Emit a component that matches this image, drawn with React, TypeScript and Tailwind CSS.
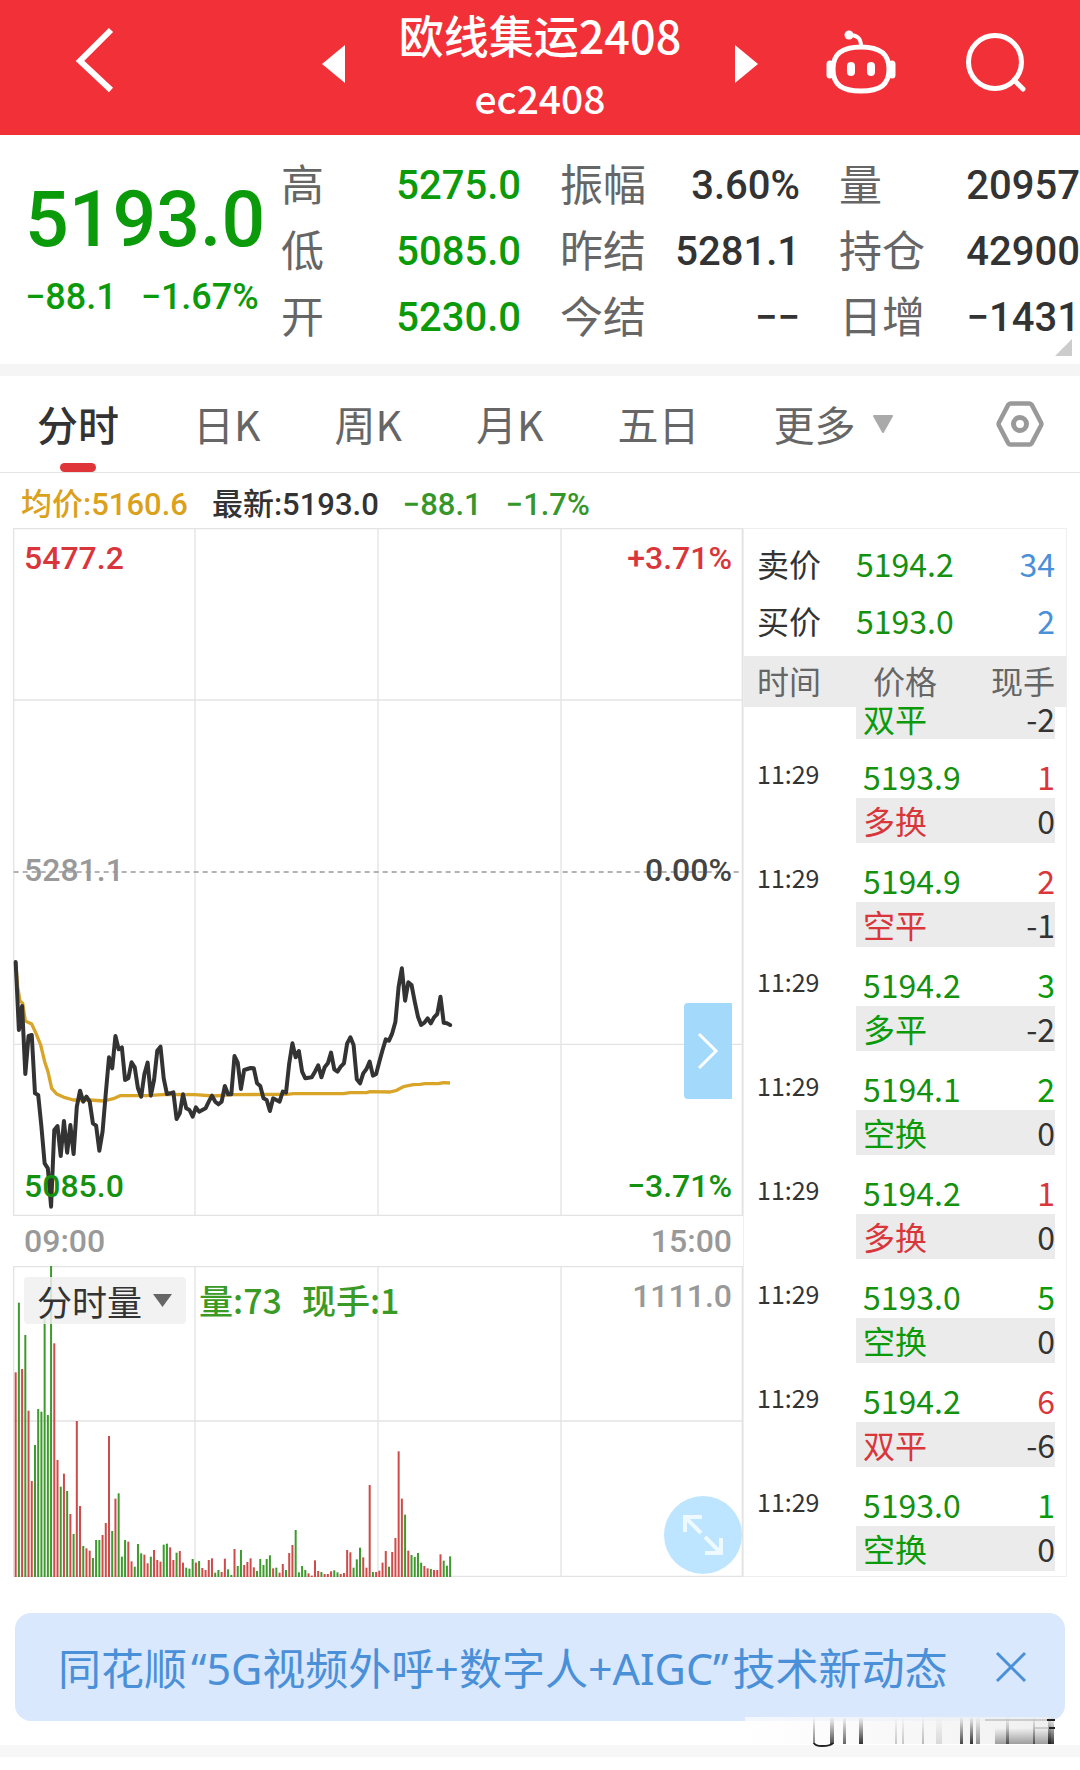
import React from "react";
import clsx from "clsx";

const stats = [
  [
    { label: "高", value: "5275.0", down: true },
    { label: "振幅", value: "3.60%" },
    { label: "量", value: "20957" },
  ],
  [
    { label: "低", value: "5085.0", down: true },
    { label: "昨结", value: "5281.1" },
    { label: "持仓", value: "42900" },
  ],
  [
    { label: "开", value: "5230.0", down: true },
    { label: "今结", value: "−−" },
    { label: "日增", value: "−1431" },
  ],
];

const tabs = ["分时", "日K", "周K", "月K", "五日"];

const quotes = [
  { label: "卖价", price: "5194.2", volume: 34 },
  { label: "买价", price: "5193.0", volume: 2 },
];

const trades = [
  { price: "5193.9", volume: 1, buy: true, type: "多换", typeUp: true, delta: "0" },
  { price: "5194.9", volume: 2, buy: true, type: "空平", typeUp: true, delta: "-1" },
  { price: "5194.2", volume: 3, buy: false, type: "多平", typeUp: false, delta: "-2" },
  { price: "5194.1", volume: 2, buy: false, type: "空换", typeUp: false, delta: "0" },
  { price: "5194.2", volume: 1, buy: true, type: "多换", typeUp: true, delta: "0" },
  { price: "5193.0", volume: 5, buy: false, type: "空换", typeUp: false, delta: "0" },
  { price: "5194.2", volume: 6, buy: true, type: "双平", typeUp: true, delta: "-6" },
  { price: "5193.0", volume: 1, buy: false, type: "空换", typeUp: false, delta: "0" },
];

// One value per minute, in chart units (y grows downwards)
const priceLine = [
  126, 330, 258, 462, 348, 345, 520, 525, 620, 730, 745, 860, 630, 618, 708, 603, 698, 615, 702,
  560, 512, 545, 530, 545, 610, 617, 692, 635, 520, 412, 445, 348, 388, 382, 480, 475, 427, 442,
  505, 530, 462, 428, 527, 480, 392, 380, 475, 522, 520, 517, 597, 580, 523, 565, 570, 590, 562,
  575, 570, 565, 545, 527, 545, 553, 545, 498, 523, 523, 408, 428, 507, 450, 447, 444, 445, 490,
  498, 535, 540, 573, 535, 540, 545, 515, 518, 430, 370, 412, 393, 455, 475, 473, 472, 455, 436,
  472, 442, 430, 398, 448, 455, 440, 430, 370, 352, 375, 478, 490, 460, 447, 425, 467, 462, 425,
  390, 358, 362, 340, 305, 200, 145, 242, 187, 195, 245, 290, 315, 308, 295, 310, 292, 282, 230,
  308, 310, 315,
];

const averageLine =
  "47,126 53,200 60,243 68,250 76,303 95,312 108,340 122,375 134,425 144,455 155,505 170,522 195,533 220,540 270,540 312,543 340,536 360,527 440,527 500,523 585,524 640,528 700,524 860,523 880,521 1030,521 1050,518 1100,518 1110,515 1170,516 1190,511 1210,500 1240,494 1260,493 1275,491 1315,491 1330,488 1350,489";

// r = up minute, g = down minute, followed by the top of the bar
const volumeBars =
  "r517 g308 r507 g405 r632 r843 g735 g627 g635 g345 g645 g198 r430 r780 g860 r821 g873 r942 g1002 r663 r918 g1038 r1045 r1052 g1074 g1020 g1020 r1005 r969 r708 g993 r896 g880 g1070 g1020 r1025 r1084 g1100 g1032 g1060 r1064 r1090 g1070 r1050 r1080 r1085 g1034 g1031 r1042 r1080 g1058 r1053 r1088 g1103 g1106 g1077 r1088 g1083 r1104 r1110 r1080 r1075 g1118 g1110 r1116 r1076 g1108 g1125 r1047 g1098 g1050 r1095 r1086 r1075 r1102 g1113 g1077 g1095 g1077 g1066 r1105 g1103 r1118 r1092 g1110 r1059 r1035 g990 g1117 g1098 g1110 r1120 r1127 r1081 r1113 g1116 r1122 r1122 r1114 g1111 g1117 r1122 r1119 r1050 r1057 g1103 g1078 g1043 r1072 r1103 r855 g1116 r1116 r1112 r1088 r1053 g1100 r1056 r1014 r754 r896 g944 r1052 g1065 g1071 g1059 g1088 r1098 r1105 g1107 r1110 r1110 r1063 g1082 g1097 g1069".split(
    " ",
  );

const minuteX = (i: number) => 47 + i * 9.655;

const Header = () => (
  <header className="grid grid-cols-[1fr_436px_1fr] items-center h-[135px] bg-[#f13037] text-white">
    <button type="button" aria-label="返回" className="justify-self-start pl-[75px] pb-4">
      <svg width="40" height="66" viewBox="0 0 40 66" fill="none" stroke="currentColor">
        <path d="M36 3 5 34l31 29" strokeWidth="6" />
      </svg>
    </button>
    <div className="flex items-center justify-between">
      <button type="button" aria-label="上一个" className="pb-2">
        <svg width="23" height="38" viewBox="0 0 23 38" fill="currentColor">
          <path d="M23 0v38L0 19z" />
        </svg>
      </button>
      <h1 className="text-center font-medium text-[45px] leading-[62px] pb-1">
        欧线集运2408
        <span className="block text-[39px]">ec2408</span>
      </h1>
      <button type="button" aria-label="下一个" className="pb-2">
        <svg width="23" height="38" viewBox="0 0 23 38" fill="currentColor">
          <path d="M0 0v38l23-19z" />
        </svg>
      </button>
    </div>
    <div className="flex items-center justify-between pl-[68px] pr-[54px] pb-3">
      <button type="button" aria-label="智能助手">
        <svg width="70" height="64" viewBox="0 0 70 64" fill="none" stroke="currentColor">
          <path
            d="M35 17c19 0 28 7 28 22 0 16-9 22-28 22S7 55 7 39c0-15 9-22 28-22z"
            strokeWidth="5"
          />
          <path d="M23 5c8 0 12 3 12 11" strokeWidth="4" />
          <circle cx="23" cy="5" r="4.500" fill="currentColor" stroke="none" />
          <path d="M25 36v6M45 36v6" strokeWidth="8" strokeLinecap="round" />
          <path d="M4 34v11M66 34v11" strokeWidth="7" strokeLinecap="round" />
        </svg>
      </button>
      <button type="button" aria-label="搜索">
        <svg width="60" height="60" viewBox="0 0 60 60" fill="none" stroke="currentColor">
          <circle cx="29" cy="30" r="26.500" strokeWidth="5" />
          <path d="m48 48 9 9" strokeWidth="5" strokeLinecap="round" />
        </svg>
      </button>
    </div>
  </header>
);

const Summary = () => (
  <section className="relative flex h-[229px] pt-4 text-[#333]">
    <div className="w-[281px] shrink-0 pl-[25px] pt-6 font-[Roboto] font-medium text-[#0a9a0a]">
      <p className="text-[77px] leading-[90px]">5193.0</p>
      <p className="flex gap-6 pt-3 text-[36px] leading-[40px]">
        <span>−88.1</span>
        <span>−1.67%</span>
      </p>
    </div>
    <dl className="grid flex-1 grid-cols-[240px_240px_1fr] grid-rows-[66px_66px_66px] gap-x-[39px]">
      {stats.flat().map((item) => (
        <div key={item.label} className="flex items-center justify-between">
          <dt className="pb-1 text-[43px] leading-[62px] text-[#666]">{item.label}</dt>
          <dd
            className={clsx(
              "pt-1 font-[Roboto] font-medium text-[40px]",
              item.down && "text-[#0a9a0a]",
            )}
          >
            {item.value}
          </dd>
        </div>
      ))}
    </dl>
    <svg className="absolute right-2 bottom-2" width="17" height="17" viewBox="0 0 17 17">
      <path d="M17 0v17H0z" fill="#ccc" />
    </svg>
  </section>
);

const Tabs = () => (
  <nav className="flex items-center h-[97px] border-b border-[#e5e5e5] pl-[37px] pr-9 text-[41px] text-[#666]">
    <div className="flex flex-1 gap-[74px]">
      {tabs.map((tab, i) => (
        <button
          key={tab}
          type="button"
          className={clsx("relative h-24", i === 0 && "font-medium text-[#333]")}
        >
          {tab}
          {i === 0 && (
            <span className="absolute bottom-0 left-1/2 h-[9px] w-9 -translate-x-1/2 rounded-full bg-[#e03538]" />
          )}
        </button>
      ))}
      <button type="button" className="flex items-center gap-4">
        更多
        <svg width="22" height="19" viewBox="0 0 22 19">
          <path d="M2 1h18L11 17z" fill="#aaa" stroke="#aaa" strokeWidth="2" strokeLinejoin="round" />
        </svg>
      </button>
    </div>
    <button type="button" aria-label="设置">
      <svg width="48" height="46" viewBox="0 0 48 46" fill="none" stroke="#999" strokeWidth="4.500">
        <path
          d="M14.500 2.500h19q1.500 0 2.300 1.400l9.200 17.600q.8 1.500 0 3l-9.200 17.600q-.8 1.400-2.300 1.400h-19q-1.500 0-2.300-1.400L3 24.500q-.8-1.500 0-3l9.200-17.600q.8-1.400 2.300-1.400z"
          strokeLinejoin="round"
        />
        <circle cx="24" cy="23" r="6.500" strokeWidth="5" />
      </svg>
    </button>
  </nav>
);

const PriceChart = () => (
  <div className="relative h-[688px] font-[Roboto] font-medium text-[32px] leading-[40px]">
    <svg
      className="block h-full w-full"
      viewBox="39 -1176 2190 2064"
      preserveAspectRatio="none"
      fill="none"
    >
      <path
        d="M41 -1174H2227V886H41zM585 -1174V886M1134 -1174V886M1683 -1174V886M41 -660H2227M41 373H2227"
        stroke="#e3e3e3"
        strokeWidth="4"
      />
      <path d="M41 -144H2227" stroke="#999" strokeWidth="5" strokeDasharray="15 12" />
      <polyline points={averageLine} stroke="#d9a528" strokeWidth="10" strokeLinejoin="round" />
      <polyline
        points={priceLine.map((y, i) => `${minuteX(i)},${y}`).join(" ")}
        stroke="#333"
        strokeWidth="12"
        strokeLinejoin="round"
        strokeLinecap="round"
      />
    </svg>
    <div className="absolute inset-0 flex flex-col justify-between px-[11px] py-[10px]">
      <p className="flex justify-between text-[#d9363b]">
        <span>5477.2</span>
        <span>+3.71%</span>
      </p>
      <p className="flex justify-between pb-1 text-[#999]">
        <span>5281.1</span>
        <span className="text-[#444]">0.00%</span>
      </p>
      <p className="flex justify-between text-[#14910f]">
        <span>5085.0</span>
        <span>−3.71%</span>
      </p>
    </div>
    <button
      type="button"
      aria-label="收起明细"
      className="absolute right-[11px] top-[475px] flex h-24 w-12 items-center justify-center rounded-l bg-[#a3d9fb]"
    >
      <svg width="22" height="38" viewBox="0 0 22 38" fill="none" stroke="#fff" strokeWidth="3">
        <path d="m2 2 17 17L2 36" />
      </svg>
    </button>
  </div>
);

const VolumeChart = () => (
  <div className="relative h-[311px]">
    <svg
      className="block h-full w-full"
      viewBox="39 198 2190 933"
      preserveAspectRatio="none"
      fill="none"
    >
      <path
        d="M41 200H2227V1129H41zM585 200V1129M1134 200V1129M1683 200V1129M41 663H2227"
        stroke="#e3e3e3"
        strokeWidth="4"
      />
      {volumeBars.map((bar, i) => {
        const top = Number(bar.slice(1));
        return (
          <rect
            key={i}
            x={minuteX(i) - 3}
            y={top}
            width="6"
            height={1131 - top}
            fill={bar[0] === "r" ? "#cf4a48" : "#3d9a2c"}
          />
        );
      })}
    </svg>
    <div className="absolute inset-x-0 top-0 flex items-start px-[11px] pt-[11px]">
      <label className="relative">
        <select
          aria-label="指标"
          className="block h-[47px] w-[162px] appearance-none rounded bg-[#f0f0f0]/85 pl-[13px] text-[35px] leading-[46px] text-[#333]"
        >
          <option>分时量</option>
        </select>
        <svg
          className="pointer-events-none absolute right-[14px] top-[17px]"
          width="19"
          height="13"
          viewBox="0 0 19 13"
        >
          <path d="M0 0h19L9.500 13z" fill="#666" />
        </svg>
      </label>
      <p className="flex flex-1 gap-5 pl-[13px] text-[34px] font-medium leading-[46px] text-[#3a9a26]">
        <span>量:73</span>
        <span>现手:1</span>
      </p>
      <span className="font-[Roboto] text-[32px] font-medium leading-[38px] text-[#999]">
        1111.0
      </span>
    </div>
    <button
      type="button"
      aria-label="全屏"
      className="absolute bottom-[3px] right-px flex size-[78px] items-center justify-center rounded-full bg-[#bee5ff]"
    >
      <svg width="40" height="40" viewBox="0 0 40 40" fill="none" stroke="#eefaff" strokeWidth="4">
        <path d="M2 17V2h17M3 3l15 15M38 23v15H22M37 37 22 22" />
      </svg>
    </button>
  </div>
);

const Trades = () => (
  <aside className="border border-[#eee] text-[32px] leading-[44px] text-[#333]">
    <table className="w-full border-collapse text-left">
      <tbody>
        <tr className="h-[5px]" />
        {quotes.map((quote) => (
          <tr key={quote.label} className="h-[57px]">
            <th className="pl-[13px] font-normal">{quote.label}</th>
            <td className="text-[#14910f]">{quote.price}</td>
            <td className="pr-[11px] text-right text-[#4a90d9]">{quote.volume}</td>
          </tr>
        ))}
        <tr className="h-2" />
      </tbody>
    </table>
    <table className="w-full table-fixed border-collapse text-left">
      <thead>
        <tr className="h-[51px] bg-[#ebebeb] text-[#666]">
          <th className="w-[112px] pb-1 pl-[13px] font-normal">时间</th>
          <th className="pb-1 pl-[17px] font-normal">价格</th>
          <th className="w-24 pb-1 pr-[11px] text-right font-normal">现手</th>
        </tr>
      </thead>
      <tbody>
        {/* Row half scrolled under the head of the list */}
        <tr>
          <td />
          <td colSpan={2} className="pr-[11px]">
            <div className="flex h-8 justify-between bg-[#ebebeb] pl-[7px] leading-[22px]">
              <span className="text-[#0a9a0a]">双平</span>
              <span>-2</span>
            </div>
          </td>
        </tr>
        {trades.map((trade, i) => (
          <React.Fragment key={i}>
            <tr className="h-[59px]">
              <td rowSpan={2} className="pl-[13px] pt-3 align-top text-[25px]">
                11:29
              </td>
              <td className="pl-[7px] pt-[14px] text-[#14910f]">{trade.price}</td>
              <td
                className={clsx(
                  "pr-[11px] pt-[14px] text-right",
                  trade.buy ? "text-[#d9363b]" : "text-[#0a9a0a]",
                )}
              >
                {trade.volume}
              </td>
            </tr>
            <tr className="h-[45px]">
              <td colSpan={2} className="pr-[11px]">
                <div className="flex h-[45px] justify-between bg-[#ebebeb] pl-[7px]">
                  <span className={trade.typeUp ? "text-[#d9363b]" : "text-[#0a9a0a]"}>
                    {trade.type}
                  </span>
                  <span>{trade.delta}</span>
                </div>
              </td>
            </tr>
          </React.Fragment>
        ))}
      </tbody>
    </table>
  </aside>
);

// x, width and darkness of the streaks under the banner
const streaks = [
  [68, 2, 0.5],
  [85, 4, 0.7],
  [98, 3, 0.6],
  [114, 4, 0.8],
  [150, 2, 0.2],
  [157, 2, 0.2],
  [177, 2, 0.25],
  [191, 6, 0.12],
  [215, 3, 0.7],
  [225, 3, 0.8],
  [231, 4, 0.4],
  [261, 3, 0.5],
  [288, 2, 0.5],
  [303, 6, 0.8],
];

const Banner = () => (
  <footer className="relative px-[15px] pt-9">
    <div className="flex h-[108px] items-center justify-between rounded-2xl bg-[#d9e8fd] pl-[43px] pr-[38px] text-[#4a90d9]">
      <a
        href="#news"
        className="pt-1 font-['Noto_Sans','Noto_Sans_CJK_SC',sans-serif] text-[43px] leading-[60px]"
      >
        同花顺<span className="mx-1">“5G视频外呼+数字人+AIGC”</span>技术新动态
      </a>
      <button type="button" aria-label="关闭">
        <svg width="32" height="32" viewBox="0 0 32 32" fill="none" stroke="currentColor">
          <path d="m2 2 28 28M30 2 2 30" strokeWidth="3" />
        </svg>
      </button>
    </div>
    <div className="-mx-[15px] mt-6 h-3 bg-[#f7f7f7]" />
    <svg
      className="absolute bottom-2 right-6"
      width="311"
      height="34"
      viewBox="0 0 311 34"
      aria-hidden="true"
    >
      <defs>
        <linearGradient id="fade" x1="0" y1="0" x2="0" y2="1">
          <stop offset="0" stopColor="#000" stopOpacity="0" />
          <stop offset="1" stopColor="#000" />
        </linearGradient>
        <linearGradient id="haze" x1="0" y1="0" x2="1" y2="0">
          <stop offset="0" stopColor="#fff" stopOpacity="0.7" />
          <stop offset="1" stopColor="#eee" stopOpacity="0.9" />
        </linearGradient>
      </defs>
      <rect y="2" width="306" height="27" fill="url(#haze)" />
      <rect x="250" y="13" width="56" height="16" fill="url(#fade)" opacity="0.350" />
      {streaks.map(([x, width, opacity]) => (
        <rect key={x} x={x} y="2" width={width} height="27" fill="url(#fade)" opacity={opacity} />
      ))}
      <path d="M69 28q1 3 8 3 9 0 11-3" fill="none" stroke="#222" strokeWidth="2" />
      <path d="M240 5h66M290 13h19" stroke="#aaa" strokeWidth="1" />
      <path d="M302 5h8M304 13h6" stroke="#222" strokeWidth="2" />
    </svg>
  </footer>
);

const App = () => {
  return (
    <main className="overflow-x-hidden bg-white font-['Noto_Sans_CJK_SC',sans-serif]">
      <Header />
      <Summary />
      <div className="h-3 bg-[#f5f5f5]" />
      <Tabs />
      <div className="flex h-[55px] items-center gap-6 pl-[21px] pt-2 font-[Roboto,'Noto_Sans_CJK_SC',sans-serif] text-[31px] leading-[40px] font-medium">
        <span className="text-[#dba11c]">均价:5160.6</span>
        <span className="text-[#333]">最新:5193.0</span>
        <span className="text-[#35962a]">−88.1</span>
        <span className="text-[#35962a]">−1.7%</span>
      </div>
      <div className="grid grid-cols-[730fr_324fr] px-[13px]">
        <section>
          <PriceChart />
          <div className="flex h-[50px] items-center justify-between px-[11px] font-[Roboto] text-[32px] font-medium text-[#999]">
            <span>09:00</span>
            <span>15:00</span>
          </div>
          <VolumeChart />
        </section>
        <Trades />
      </div>
      <Banner />
    </main>
  );
};

export default App;
